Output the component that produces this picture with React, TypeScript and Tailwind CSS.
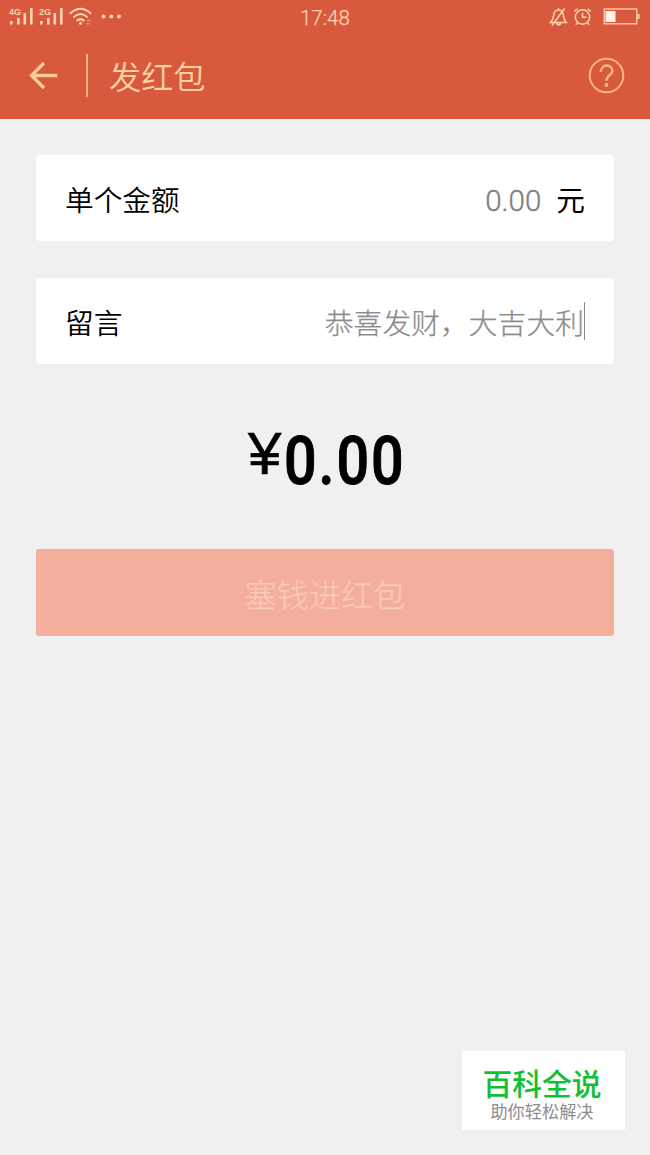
import type { ReactNode } from "react";

function Signal({ label }: { label: string }) {
  return (
    <svg width="26" height="20" viewBox="0 0 26 20" fill="#fbd3b0">
      <text x="0" y="8" fontSize="9.5" fontWeight="700" fontFamily="Liberation Sans, sans-serif" textLength="12" lengthAdjust="spacingAndGlyphs">{label}</text>
      <rect x="1" y="14" width="2.6" height="3.5" />
      <rect x="8" y="11" width="2.6" height="6.5" />
      <rect x="14.5" y="6" width="2.6" height="11.5" />
      <rect x="21" y="1" width="2.6" height="16.5" />
    </svg>
  );
}

function StatusBar() {
  return (
    <div className="relative flex h-[33px] items-center justify-between pl-[9px] pr-[9px]">
      <div className="flex items-center">
        <div className="flex gap-[4px]">
          <Signal label="4G" />
          <Signal label="2G" />
        </div>
        <svg className="ml-[4px] mt-px" width="24" height="20" viewBox="0 0 24 20" fill="none" stroke="#fbd3b0" strokeWidth="2">
          <path d="M1 6.7Q11.5 -3.2 22 6.7M4.4 10.4Q11.5 3.6 18.6 10.4M7.5 14Q11.5 10.2 15.5 14" />
          <circle cx="11.5" cy="16.3" r="1.5" fill="#fbd3b0" stroke="none" />
          <path d="M18 13.5h3.5M17.5 16.8h3.5" stroke="#f18b6f" strokeWidth="1.5" />
        </svg>
        <svg className="ml-[8px]" width="22" height="6" viewBox="0 0 22 6" fill="#fbd3b0">
          <circle cx="2.5" cy="2.5" r="2" />
          <circle cx="10.3" cy="2.5" r="2" />
          <circle cx="18" cy="2.5" r="2" />
        </svg>
      </div>
      <span className="absolute left-[300px] top-[6px] font-['Roboto',sans-serif] text-[20.5px] font-light leading-[24px] text-[#fbd3b0] [-webkit-text-stroke:0.25px_#fbd3b0]">17:48</span>
      <div className="flex items-center">
        <svg width="20" height="20" viewBox="0 0 20 20" fill="none" stroke="#fbd3b0" strokeWidth="1.5">
          <path d="M1.5 15.5C4.2 13 4.3 11 4.6 8.5C5 5 6.8 3 9.5 3S14 5 14.4 8.5C14.7 11 14.8 13 17.2 15.5ZM9.5 1v2M7.8 16a1.8 1.8 0 0 0 3.6 0M15.5 1.5L3 18.5" />
        </svg>
        <svg className="ml-[4px]" width="20" height="20" viewBox="0 0 20 20" fill="none" stroke="#fbd3b0" strokeWidth="1.5">
          <circle cx="9.5" cy="10" r="7.2" />
          <path d="M9.5 5.7v4.5h4M1.3 4.5L4.5 1.8M17.7 4.5L14.5 1.8M4.4 15.8l-1.6 2M14.6 15.8l1.6 2" />
        </svg>
        <svg className="ml-[10px]" width="38" height="17" viewBox="0 0 38 17" fill="#fbd3b0">
          <rect x="1.25" y="1" width="32.5" height="14.8" fill="none" stroke="#fbd3b0" strokeWidth="1.3" />
          <rect x="2.5" y="3" width="10" height="11" fill="#fff3e6" />
          <rect x="34.5" y="6" width="2" height="5" />
        </svg>
      </div>
    </div>
  );
}

function NavBar() {
  return (
    <div className="flex h-[86px] items-center pl-[29px] pr-[25px]">
      <svg width="30" height="30" viewBox="0 0 30 30" fill="none" stroke="#fdcb94" strokeWidth="3.3">
        <path d="M28.3 14.5H3M15 2L2.5 14.5L15 27" />
      </svg>
      <div className="mb-[2px] ml-[27px] h-[43px] w-[2px] bg-[#f5b583]" />
      <h1 className="mb-[2px] ml-[21px] text-[32.2px] font-[350] leading-[44px] text-[#fdd29f]">发红包</h1>
      <svg className="mb-px ml-auto" width="37" height="37" viewBox="0 0 37 37" fill="none" stroke="#fab585" strokeWidth="2">
        <circle cx="18.5" cy="18.5" r="16.8" />
        <path d="M12.8 15C12.8 6.6 24.4 6.6 24.4 13.9C24.4 18.2 18.5 18 18.5 23.7" strokeWidth="2.4" />
        <circle cx="18.5" cy="28" r="1.9" fill="#fab585" stroke="none" />
      </svg>
    </div>
  );
}

function Field({ label, children }: { label: string; children: ReactNode }) {
  return (
    <div className="flex h-[86px] items-center justify-between rounded-[4px] bg-white pl-[29px] pr-[29px]">
      <span className="mt-[2px] text-[28.7px] font-[350] leading-[40px] text-black">{label}</span>
      <div className="flex items-center">{children}</div>
    </div>
  );
}

export default function App() {
  return (
    <div className="relative h-[1155px] w-[650px] overflow-hidden bg-[#f0f0f0] font-['Noto_Sans_CJK_SC',sans-serif]">
      <header className="h-[119px] bg-[#d9593f]">
        <StatusBar />
        <NavBar />
      </header>
      <main className="flex flex-col px-[36px] pt-[36px]">
        <Field label="单个金额">
          <span className="mt-[6px] font-['Roboto',sans-serif] text-[29.5px] font-light leading-[40px] text-[#808080] [-webkit-text-stroke:0.35px_#808080]">0.00</span>
          <span className="ml-[15px] mt-[2px] text-[28.7px] leading-[40px] text-black">元</span>
        </Field>
        <div className="h-[37px]" />
        <Field label="留言">
          <span className="mt-[2px] text-[28.8px] font-light leading-[40px] text-[#8c8c8c] [-webkit-text-stroke:0.25px_#8c8c8c]">恭喜发财，大吉大利</span>
          <span className="h-[38px] w-px bg-[#888]" />
        </Field>
        <div className="mt-[56px] flex h-[80px] pl-[212px] text-black">
          <span className="mt-[-1px] w-[36px] font-['Liberation_Sans',sans-serif] text-[60px] leading-[70px] [-webkit-text-stroke:0.6px_black]">¥</span>
          <span className="mt-[2px] w-[118px] origin-left scale-x-[0.87] font-['Roboto',sans-serif] text-[66px] font-medium leading-[80px] tracking-[2.2px] [-webkit-text-stroke:1px_black]">0.00</span>
        </div>
        <button className="mt-[49px] h-[87px] rounded-[3px] bg-[#f4af9c] text-[32.2px] font-light leading-[44px] text-[#f9c9b9] [-webkit-text-stroke:0.25px_#f9c9b9]">塞钱进红包</button>
      </main>
      <aside className="absolute left-[462px] top-[1051px] flex h-[79px] w-[163px] flex-col items-center bg-white pr-[3px]">
        <strong className="mt-[13px] text-[29.8px] font-medium leading-[36px] text-[#0fc132]">百科全说</strong>
        <span className="mt-px text-[17.2px] leading-[20px] text-[#8d8d8d]">助你轻松解决</span>
      </aside>
    </div>
  );
}
